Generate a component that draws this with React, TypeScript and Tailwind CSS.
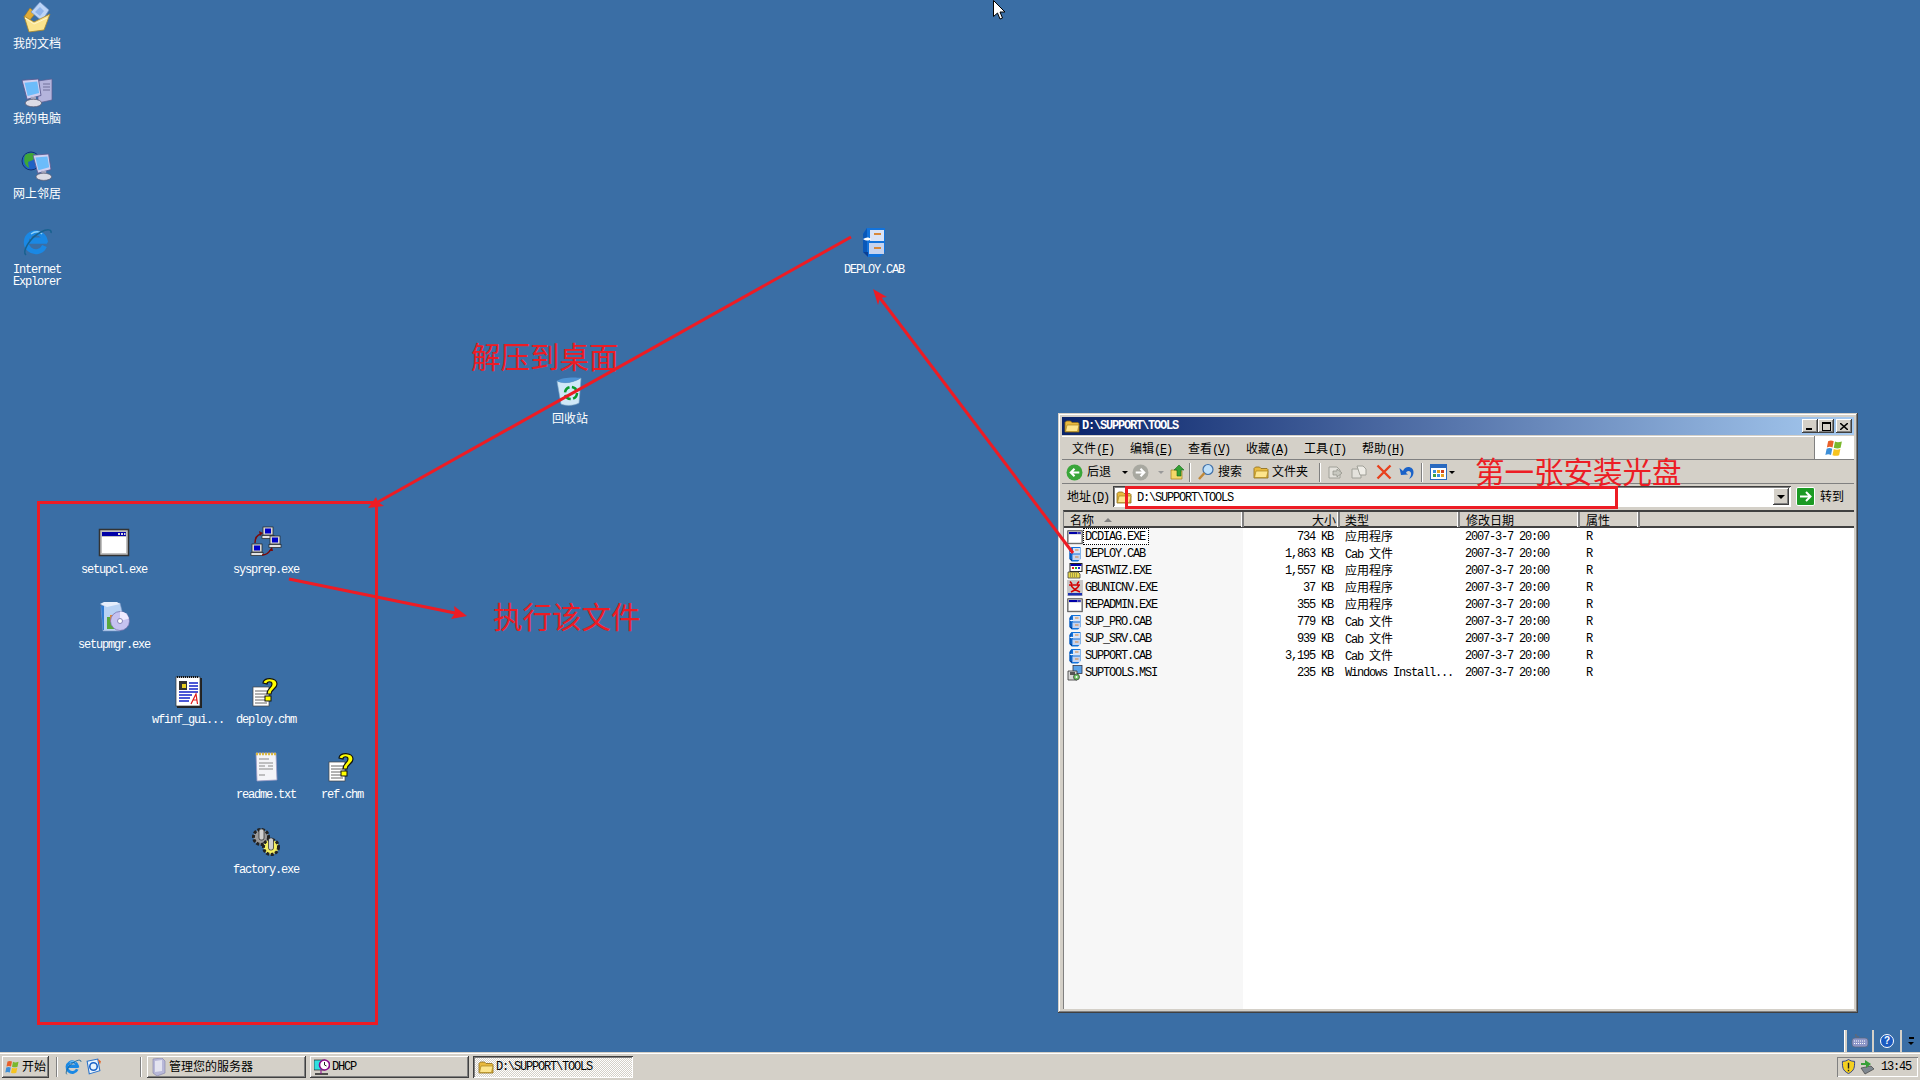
const RED = "#ed1c24";

// SimSun isn't available: CJK and Latin runs get their own fonts so Latin keeps a 6px advance
function Txt({ children }: { children: string }) {
  const parts = children.split(/([\u4e00-\u9fff]+)/).filter(Boolean);
  return (
    <>
      {parts.map((p, i) =>
        /[\u4e00-\u9fff]/.test(p) ? (
          <span key={i} className="font-['Noto_Sans_CJK_SC',sans-serif] text-[12px]">{p}</span>
        ) : (
          <span key={i} className="font-['Liberation_Mono',monospace] text-[12px] tracking-[-1.2px]">{p}</span>
        ),
      )}
    </>
  );
}

const Folder = ({ s = 16 }: { s?: number }) => (
  <svg width={s} height={s} viewBox="0 0 16 16" className="shrink-0">
    <path d="M1 4.500 2.500 3h4L8 4.500h6l1 1V14H1z" fill="#e8b93e" stroke="#8a6a18" strokeWidth=".8" />
    <path d="M1.500 13.500 3 7h12l-1.500 6.500z" fill="#fde58c" stroke="#a88420" strokeWidth=".7" />
  </svg>
);

const WinApp = ({ s = 16 }: { s?: number }) => (
  <svg width={s} height={s} viewBox="0 0 32 32">
    <rect x="1.500" y="3.500" width="29" height="26" fill="#c0c0c0" stroke="#333" strokeWidth="1.500" />
    <rect x="4" y="6" width="24" height="4" fill="#0000a8" />
    <rect x="20" y="7" width="2" height="2" fill="#ddd" /><rect x="23" y="7" width="2" height="2" fill="#ddd" /><rect x="26" y="7" width="1.500" height="2" fill="#ddd" />
    <rect x="4" y="11" width="24" height="16" fill="#fff" />
  </svg>
);

const Cab = ({ s = 16 }: { s?: number }) => (
  <svg width={s} height={s} viewBox="0 0 32 32">
    <path d="M5 8 9 2h18v24l-5 5H10L5 26z" fill="#1273dc" />
    <path d="M5 8 9 2v24l-4 0z" fill="#0a58b8" />
    <path d="M5 26h5v5z" fill="#0c3f92" />
    <path d="M12 4h14v11H12z" fill="#d9e3f7" />
    <path d="M11 17h15v11H11z" fill="#c6d3ef" />
    <rect x="16" y="7" width="7" height="2" fill="#d8883a" />
    <rect x="16" y="21" width="7" height="2" fill="#d8883a" />
    <path d="M5 13c3-2 6-2 8 0-2 2-5 2-8 0z" fill="#fff" />
  </svg>
);

const FastWiz = () => (
  <svg width="16" height="16" viewBox="0 0 16 16">
    <rect x="3" y="0.500" width="12" height="8" fill="#fff" stroke="#222" />
    <rect x="3.500" y="1" width="11" height="2" fill="#0000a8" />
    <rect x="5" y="4" width="2" height="2" fill="#d22" /><rect x="8" y="4" width="2" height="2" fill="#2a2" /><rect x="11" y="4" width="2" height="2" fill="#22c" />
    <path d="M1 9h10l2 2v4H1z" fill="#e8d84a" stroke="#444" strokeWidth=".8" />
    <path d="M3 11h7M3 13h7" stroke="#444" strokeWidth=".8" strokeDasharray="1 1" />
  </svg>
);

const Gb2u = () => (
  <svg width="16" height="16" viewBox="0 0 16 16">
    <rect width="16" height="16" fill="#c8c8c8" />
    <path d="M3 1.500 5 4M12 1.500 10 4M2 5h11M12 5c-1 3-4 5-8 7M4 5c1 3 4 5 9 7" fill="none" stroke="#d40000" strokeWidth="1.600" />
    <path d="M1 13h14v2.500H1z" fill="#1a2fb0" />
  </svg>
);

const Msi = () => (
  <svg width="16" height="16" viewBox="0 0 16 16">
    <rect x="6" y="0.500" width="9" height="8" fill="#5aa2e8" stroke="#334" strokeWidth=".8" />
    <path d="M1 6h9v9H1z" fill="#d8d8d8" stroke="#333" strokeWidth=".8" />
    <rect x="3" y="7" width="5" height="3" fill="#555" />
    <circle cx="9.500" cy="12" r="3" fill="#68c060" stroke="#333" strokeWidth=".7" />
    <circle cx="9.500" cy="12" r="1" fill="#fff" />
  </svg>
);

const WinFlag = ({ s = 16 }: { s?: number }) => (
  <svg width={s} height={s} viewBox="0 0 16 16">
    <path d="M2.500 2.500c1.500-.8 3-.8 4.500 0L6 7.500C4.500 6.800 3 6.800 1.500 7.500z" fill="#e8602a" />
    <path d="M8 2.800c1.500.8 3 .8 5.500 0l-1 5c-2 .8-3.500.6-5.500-.1z" fill="#7ab82e" />
    <path d="M1.300 8.500c1.500-.8 3-.8 4.500 0l-1 5c-1.500-.7-3-.7-4.500 0z" fill="#3d8fd8" />
    <path d="M7 8.700c1.500.8 3.500.9 5.300 0l-1 5c-2 .8-3.500.7-5.300 0z" fill="#f6c420" />
  </svg>
);

const Monitor = ({ x, y, w = 15 }: { x: number; y: number; w?: number }) => (
  <g transform={`translate(${x} ${y}) scale(${w / 15})`}>
    <path d="M0 1 13 0l2 13-11 3z" fill="#d0d0f0" stroke="#5a5a90" strokeWidth=".7" />
    <path d="M2 3 12 2l1.500 9-9 2.500z" fill="#6cbcfa" />
    <rect x="7" y="14" width="4" height="4" fill="#a8a8c0" />
    <ellipse cx="9" cy="19" rx="6.500" ry="3" fill="#dcdce6" stroke="#5a5a70" strokeWidth=".6" />
  </g>
);

const MyDocs = () => (
  <svg width="32" height="32" viewBox="0 0 32 32">
    <path d="M3 16 9 7l6 5-8 9z" fill="#e0ac38" stroke="#9a7420" strokeWidth=".6" />
    <path d="M10 11 19 1l9 8-7 11z" fill="#bcd4f6" stroke="#6f8fc4" strokeWidth=".7" />
    <path d="M14 11 19 6l4 4-4 5z" fill="#8fb4ea" />
    <path d="M3 15 13 21l16-8-6 16-15 2z" fill="#fbe48e" stroke="#a88428" strokeWidth=".8" />
    <path d="M4 17 13 23l13-6" fill="none" stroke="#fff6cc" />
  </svg>
);

const MyPc = () => (
  <svg width="32" height="32" viewBox="0 0 32 32">
    <path d="M17 5 31 3v21l-14 3z" fill="#b4b4dc" stroke="#5c5c90" strokeWidth=".7" />
    <path d="M22 8h7M22 11h7M22 14h7" stroke="#70709a" />
    <Monitor x={1} y={3} w={19} />
  </svg>
);

const Network = () => (
  <svg width="32" height="32" viewBox="0 0 32 32">
    <circle cx="10" cy="10" r="9" fill="#1f62c4" stroke="#123072" />
    <path d="M4 4c3-2 8-3 11 0l-3 5-5 2 1 6c-4-2-6-7-4-13z" fill="#3fa636" />
    <Monitor x={12} y={3} w={18} />
  </svg>
);

const IeLogo = ({ s = 32 }: { s?: number }) => (
  <svg width={s} height={s} viewBox="0 0 32 32">
    <path d="M23.500 20a9.500 9.500 0 1 1 .5-6H9" fill="none" stroke="#1a88e4" strokeWidth="5" />
    <path d="M6 16h20" stroke="#1a88e4" strokeWidth="3.500" />
    <path d="M10 8c4-3 9-3 11 0" fill="none" stroke="#8ed2fa" strokeWidth="1.500" />
    <path d="M5 29C1 26 8 12 20 6c6-3 11-3 10 1" fill="none" stroke="#17618f" strokeWidth="1.500" />
  </svg>
);

const Recycle = () => (
  <svg width="32" height="32" viewBox="0 0 32 32">
    <path d="M3 5c6 3 16 2 24-3l-2 25c-5 3-14 3-18 1z" fill="#d0e8f8" stroke="#7fa8c8" strokeWidth=".6" />
    <path d="M3 5c6 3 16 2 24-3-5-1-20-1-24 3z" fill="#4f94d4" />
    <circle cx="17" cy="17" r="6" fill="none" stroke="#0b9a2c" strokeWidth="2.500" strokeDasharray="7 2.500" />
  </svg>
);

const SetupMgr = () => (
  <svg width="32" height="32" viewBox="0 0 32 32">
    <path d="M3 5 22 2l2 8-2 20H5z" fill="#b8d2f4" stroke="#8098c4" strokeWidth=".6" />
    <path d="M2 3 9 6l13-3-3-2H6z" fill="#e6eefc" />
    <path d="M3 5h3v24H5z" fill="#2f7ad0" />
    <rect x="9" y="16" width="7" height="12" fill="#58a83c" /><rect x="12" y="14" width="5" height="7" fill="#e08a38" />
    <circle cx="22" cy="20" r="9.500" fill="#c6c2f0" stroke="#6e6ca8" strokeWidth=".7" />
    <path d="M22 10.500a9.500 9.500 0 0 1 9 7l-9 2.500z" fill="#eeeaff" />
    <circle cx="22" cy="20" r="2.500" fill="#fff" stroke="#8784b8" />
  </svg>
);

const Pc = ({ x, y }: { x: number; y: number }) => (
  <g transform={`translate(${x} ${y})`}>
    <rect x="1" y="0" width="10" height="8" fill="#d8d8d8" stroke="#222" strokeWidth=".7" />
    <rect x="3" y="1.500" width="6" height="5" fill="#0000c8" />
    <rect x="0" y="8.500" width="12" height="3" fill="#e4e4e4" stroke="#222" strokeWidth=".7" />
  </g>
);

const Sysprep = () => (
  <svg width="32" height="32" viewBox="0 0 32 32">
    <Pc x={12} y={1} /><Pc x={19} y={10} /><Pc x={1} y={18} />
    <path d="M5 17c0-5 2-8 6-9M12 29c4 0 7-2 9-6" fill="none" stroke="#7a0a0a" strokeWidth="1.500" />
    <path d="M9 5l4 2-3 3zM19 25l3-4 1 4z" fill="#7a0a0a" />
  </svg>
);

const WfDoc = () => (
  <svg width="32" height="32" viewBox="0 0 32 32">
    <rect x="5" y="2" width="25" height="30" fill="#222" />
    <rect x="4" y="1" width="24" height="29" fill="#fff" stroke="#333" strokeWidth=".7" />
    <path d="M5 1h22" stroke="#111" strokeWidth="2" strokeDasharray="1 1" />
    <rect x="7" y="5" width="8" height="9" fill="#333" /><rect x="10" y="8" width="4" height="4" fill="#e8d020" />
    <path d="M17 7h9M17 10h9M17 13h9M7 16h19M7 19h13M7 22h11M7 25h10" stroke="#1020c8" strokeWidth="1.300" />
    <path d="M19 28 24 18l1.500 10M21 24h4" fill="none" stroke="#e01818" strokeWidth="1.200" />
  </svg>
);

const Chm = () => (
  <svg width="32" height="32" viewBox="0 0 32 32">
    <rect x="3" y="11" width="16" height="19" fill="#fff" stroke="#444" strokeWidth=".7" />
    <path d="M5 15h12M5 18h12M5 21h12M5 24h12M5 27h12" stroke="#666" />
    <path d="M13 7c0-6 14-6 14 1 0 5-6 5-6 10h-4c0-6 5-6 5-10 0-3-5-3-5 0z" fill="#ffff00" stroke="#111" strokeWidth="1.200" />
    <rect x="15" y="20" width="6" height="5" fill="#ffff00" stroke="#111" />
  </svg>
);

const TxtDoc = () => (
  <svg width="32" height="32" viewBox="0 0 32 32">
    <path d="M6 2h20l1 27-20 1z" fill="#f4f4f8" stroke="#9a9ac4" strokeWidth=".8" />
    <path d="M6 3h20" stroke="#d8b840" strokeWidth="2.500" strokeDasharray="2 1" />
    <path d="M9 8h10M9 12h14M9 15h6M18 15h5M9 18h14M9 24h6" stroke="#888" />
  </svg>
);

const Factory = () => (
  <svg width="32" height="32" viewBox="0 0 32 32">
    <circle cx="11" cy="11" r="7.500" fill="#9a9a9a" stroke="#222" strokeWidth="3" strokeDasharray="3 1.500" />
    <rect x="9" y="3" width="5" height="11" rx="2" fill="#d0d0d0" stroke="#222" strokeWidth=".7" />
    <circle cx="21" cy="21" r="7.500" fill="#f4f060" stroke="#222" strokeWidth="3" strokeDasharray="3 1.500" />
    <rect x="18.500" y="12" width="5" height="12" rx="2" fill="#d0d0d0" stroke="#222" strokeWidth=".7" />
  </svg>
);

const desktopIcons = [
  { pos: "left-[0px] top-[0px]", icon: <MyDocs />, label: "我的文档" },
  { pos: "left-[0px] top-[75px]", icon: <MyPc />, label: "我的电脑" },
  { pos: "left-[0px] top-[150px]", icon: <Network />, label: "网上邻居" },
  { pos: "left-[0px] top-[225px]", icon: <IeLogo />, label: "Internet\nExplorer" },
  { pos: "left-[837px] top-[225px]", icon: <Cab s={32} />, label: "DEPLOY.CAB" },
  { pos: "left-[533px] top-[375px]", icon: <Recycle />, label: "回收站" },
  { pos: "left-[77px] top-[525px]", icon: <WinApp s={32} />, label: "setupcl.exe" },
  { pos: "left-[229px] top-[525px]", icon: <Sysprep />, label: "sysprep.exe" },
  { pos: "left-[77px] top-[600px]", icon: <SetupMgr />, label: "setupmgr.exe" },
  { pos: "left-[151px] top-[675px]", icon: <WfDoc />, label: "wfinf_gui..." },
  { pos: "left-[229px] top-[675px]", icon: <Chm />, label: "deploy.chm" },
  { pos: "left-[229px] top-[750px]", icon: <TxtDoc />, label: "readme.txt" },
  { pos: "left-[305px] top-[750px]", icon: <Chm />, label: "ref.chm" },
  { pos: "left-[229px] top-[825px]", icon: <Factory />, label: "factory.exe" },
];

const files = [
  { name: "DCDIAG.EXE", size: "734 KB", type: "应用程序", icon: <WinApp /> },
  { name: "DEPLOY.CAB", size: "1,863 KB", type: "Cab 文件", icon: <Cab /> },
  { name: "FASTWIZ.EXE", size: "1,557 KB", type: "应用程序", icon: <FastWiz /> },
  { name: "GBUNICNV.EXE", size: "37 KB", type: "应用程序", icon: <Gb2u /> },
  { name: "REPADMIN.EXE", size: "355 KB", type: "应用程序", icon: <WinApp /> },
  { name: "SUP_PRO.CAB", size: "779 KB", type: "Cab 文件", icon: <Cab /> },
  { name: "SUP_SRV.CAB", size: "939 KB", type: "Cab 文件", icon: <Cab /> },
  { name: "SUPPORT.CAB", size: "3,195 KB", type: "Cab 文件", icon: <Cab /> },
  { name: "SUPTOOLS.MSI", size: "235 KB", type: "Windows Install...", icon: <Msi /> },
];

const menus = [
  ["文件", "F"], ["编辑", "E"], ["查看", "V"], ["收藏", "A"], ["工具", "T"], ["帮助", "H"],
];

const RAISED = "shadow-[inset_-1px_-1px_#404040,inset_1px_1px_#fff,inset_-2px_-2px_#808080]";
const SUNKEN = "shadow-[inset_1px_1px_#404040,inset_-1px_-1px_#fff,inset_2px_2px_#808080]";
const HEAD = "flex h-[15px] items-center border-r-2 border-r-[#808080] shadow-[inset_-1px_0_#fff]";

const Sep = () => <div className="mx-[3px] h-[19px] w-[2px] border-l border-r border-l-[#808080] border-r-white" />;

function NavCircle({ color }: { color: string }) {
  return (
    <svg width="17" height="17" viewBox="0 0 16 16">
      <circle cx="8" cy="8" r="7.500" fill={color} />
      <path d="M12.500 8H5M8 4.500 4.500 8 8 11.500" fill="none" stroke="#fff" strokeWidth="2" />
    </svg>
  );
}

function Toolbar() {
  return (
    <div className="flex h-[24px] items-center border-b border-b-[#808080] pl-[4px] pt-[1px] whitespace-pre">
      <NavCircle color="#3aa63a" />
      <span className="ml-[4px]"><Txt>后退</Txt></span>
      <span className="ml-[11px] h-0 w-0 border-x-[3px] border-t-[3px] border-x-transparent border-t-black" />
      <span className="ml-[4px] rotate-180"><NavCircle color="#a8a8a0" /></span>
      <span className="ml-[9px] h-0 w-0 border-x-[3px] border-t-[3px] border-x-transparent border-t-[#999]" />
      <svg className="ml-[6px]" width="16" height="16" viewBox="0 0 16 16">
        <path d="M1 6h5l1 1h5v8H1z" fill="#f4d868" stroke="#a08020" strokeWidth=".7" />
        <path d="M9 1 14 6h-3v6H7V6H4z" fill="#34a034" stroke="#1a6a1a" strokeWidth=".6" />
      </svg>
      <Sep />
      <svg className="ml-[3px]" width="18" height="18" viewBox="0 0 18 18">
        <circle cx="11" cy="6.500" r="5" fill="#bfe0fa" stroke="#4070a8" strokeWidth="1.200" />
        <path d="M7.500 10 2 16" stroke="#c08838" strokeWidth="2.500" />
      </svg>
      <span className="ml-[3px]"><Txt>搜索</Txt></span>
      <span className="ml-[11px]"><Folder /></span>
      <span className="ml-[3px]"><Txt>文件夹</Txt></span>
      <div className="ml-[8px]"><Sep /></div>
      <svg className="ml-[3px]" width="16" height="16" viewBox="0 0 16 16">
        <path d="M2 3h8l3 3v8H2z" fill="#e4e2dc" stroke="#a0a098" />
        <path d="M6 7h4V5l5 4-5 4v-2H6z" fill="#c8c8c0" stroke="#8c8c84" strokeWidth=".7" />
      </svg>
      <svg className="ml-[8px]" width="16" height="16" viewBox="0 0 16 16">
        <path d="M1 5h7l2 2v7H1z" fill="#e4e2dc" stroke="#a0a098" />
        <path d="M6 2h6l3 3v6H9z" fill="#eeece6" stroke="#a0a098" />
      </svg>
      <svg className="ml-[9px]" width="16" height="16" viewBox="0 0 16 16">
        <path d="M1.500 1.500 14.500 14.500M14.500 1.500 1.500 14.500" stroke="#e8401c" strokeWidth="2.400" />
      </svg>
      <svg className="ml-[7px]" width="16" height="16" viewBox="0 0 16 16">
        <path d="M4 7C6 1 15 2 14.500 9c-.3 3-2 5-4.500 6 1.500-2 3-5 1.500-7C10 6 7.500 7 7 9l2 1.500-7 .5L.5 4z" fill="#1a62c8" />
      </svg>
      <div className="ml-[3px]"><Sep /></div>
      <svg className="ml-[4px]" width="18" height="16" viewBox="0 0 18 16">
        <rect x=".5" y=".5" width="16" height="15" fill="#fff" stroke="#2a6ac0" />
        <rect x="1" y="1" width="15" height="3" fill="#2a6ac0" />
        <rect x="3" y="6" width="3" height="3" fill="#3a8fe0" /><rect x="7" y="6" width="3" height="3" fill="#e8a020" /><rect x="11" y="6" width="3" height="3" fill="#d04020" />
        <rect x="3" y="10" width="3" height="3" fill="#40a040" /><rect x="7" y="10" width="3" height="3" fill="#3a8fe0" /><rect x="11" y="10" width="3" height="3" fill="#e8a020" />
      </svg>
      <span className="ml-[1px] h-0 w-0 border-x-[3px] border-t-[3px] border-x-transparent border-t-black" />
    </div>
  );
}

function AddressBar() {
  return (
    <div className="flex h-[25px] items-center whitespace-pre">
      <span className="ml-[5px] w-[46px]"><Txt>地址(</Txt><u><Txt>D</Txt></u><Txt>)</Txt></span>
      <div className={`flex h-[21px] w-[678px] items-center pl-[3px] pr-[2px] bg-white ${SUNKEN}`}>
        <Folder />
        <span className="ml-[5px] mt-[2px]"><Txt>{"D:\\SUPPORT\\TOOLS"}</Txt></span>
        <div className={`ml-auto flex h-[17px] w-[16px] items-center justify-center bg-[#d4d0c8] ${RAISED}`}>
          <span className="h-0 w-0 border-x-[4px] border-t-[4px] border-x-transparent border-t-black" />
        </div>
      </div>
      <div className="ml-[5px] flex h-[19px] w-[19px] items-center justify-center rounded-[2px] border border-white bg-[#1c9a24] text-white">
        <svg width="13" height="13" viewBox="0 0 13 13"><path d="M1 6.500h10M7 2l4.500 4.500L7 11" fill="none" stroke="#fff" strokeWidth="2" /></svg>
      </div>
      <span className="ml-[5px]"><Txt>转到</Txt></span>
    </div>
  );
}

function Explorer() {
  return (
    <div className="absolute left-[1058px] top-[413px] flex h-[600px] w-[800px] flex-col bg-[#d4d0c8] p-[4px] shadow-[inset_-1px_-1px_#404040,inset_1px_1px_#d4d0c8,inset_-2px_-2px_#808080,inset_2px_2px_#fff]">
      <div className="flex h-[18px] items-center bg-[linear-gradient(90deg,#0a246a,#a6caf0)] pl-[2px] pr-[2px] whitespace-pre">
        <Folder />
        <span className="ml-[2px] font-bold text-white"><Txt>{"D:\\SUPPORT\\TOOLS"}</Txt></span>
        <div className="ml-auto flex items-center">
          {["min", "max"].map((b) => (
            <div key={b} className={`flex h-[14px] w-[16px] items-center justify-center bg-[#d4d0c8] ${RAISED}`}>
              {b === "min" ? <span className="mt-[6px] mr-[2px] h-[2px] w-[6px] bg-black" /> : <span className="h-[9px] w-[9px] border border-t-2 border-black" />}
            </div>
          ))}
          <div className={`ml-[2px] flex h-[14px] w-[16px] items-center justify-center bg-[#d4d0c8] ${RAISED}`}>
            <svg width="8" height="7" viewBox="0 0 8 7"><path d="M0 0 8 7M8 0 0 7" stroke="#000" strokeWidth="1.500" /></svg>
          </div>
        </div>
      </div>

      <div className="mt-[1px] flex h-[24px] items-stretch border-b border-b-[#808080] shadow-[inset_0_1px_#fff] whitespace-pre">
        <div className="flex items-center pl-[10px] pt-[3px]">
          {menus.map(([zh, key]) => (
            <span key={key} className="w-[58px]"><Txt>{zh + "("}</Txt><u><Txt>{key}</Txt></u><Txt>)</Txt></span>
          ))}
        </div>
        <div className="ml-auto flex w-[40px] items-center justify-center border-l border-l-[#808080] bg-white"><WinFlag s={20} /></div>
      </div>
      <Toolbar />
      <AddressBar />

      <div className="mt-[1px] ml-[1px] flex min-h-0 flex-1 flex-col border-t-2 border-l border-t-[#404040] border-l-[#808080] bg-white">
        <div className="flex h-[16px] shrink-0 border-b-2 border-b-[#404040] bg-[#d4d0c8] whitespace-pre">
          <div className={`${HEAD} w-[180px] pl-[6px]`}>
            <Txt>名称</Txt>
            <span className="ml-[10px] h-0 w-0 border-x-[4px] border-b-[4px] border-x-transparent border-b-[#808080]" />
          </div>
          <div className={`${HEAD} w-[96px] justify-end pr-[2px]`}><Txt>大小</Txt></div>
          <div className={`${HEAD} w-[120px] pl-[5px]`}><Txt>类型</Txt></div>
          <div className={`${HEAD} w-[120px] pl-[6px]`}><Txt>修改日期</Txt></div>
          <div className={`${HEAD} w-[60px] pl-[6px]`}><Txt>属性</Txt></div>
        </div>
        <div className="flex-1 bg-[linear-gradient(90deg,#f7f7f7_179px,#fff_179px)] whitespace-pre">
          {files.map((f, i) => (
            <div key={f.name} className="grid h-[17px] grid-cols-[180px_96px_120px_120px_60px] items-center">
              <div className="flex h-[17px] items-center pl-[3px]">
                {f.icon}
                {i === 0 ? (
                  <span className="flex h-[17px] items-center bg-white pl-[2px] pr-[4px] outline-1 outline-dotted outline-offset-[-1px] outline-black"><Txt>{f.name}</Txt></span>
                ) : (
                  <span className="ml-[2px]"><Txt>{f.name}</Txt></span>
                )}
              </div>
              <div className="pr-[7px] text-right"><Txt>{f.size}</Txt></div>
              <div className="pl-[5px]"><Txt>{f.type}</Txt></div>
              <div className="pl-[5px]"><Txt>2007-3-7 20:00</Txt></div>
              <div className="pl-[6px]"><Txt>R</Txt></div>
            </div>
          ))}
        </div>
      </div>
    </div>
  );
}

function Annotations() {
  return (
    <svg className="pointer-events-none absolute left-0 top-0" width="1920" height="1080" fill="none" stroke={RED} strokeWidth="3">
      <rect x="38.500" y="502.500" width="338" height="521" />
      <rect x="1126.500" y="487.500" width="490" height="20" />
      <path d="M851 237 378 502" />
      <path d="M368 508 376 497 378 502 384 506z" fill={RED} stroke="none" />
      <path d="M1073 553 880 298" />
      <path d="M873 289 887 297 880 298 878 305z" fill={RED} stroke="none" />
      <path d="M289 579 455 613" />
      <path d="M467 616 454 606 455 613 451 619z" fill={RED} stroke="none" />
    </svg>
  );
}

function Note({ pos, children }: { pos: string; children: string }) {
  return (
    <span className={`absolute ${pos} font-['Noto_Sans_CJK_SC',sans-serif] text-[29.5px] font-normal leading-[34px] whitespace-nowrap text-[#ed1c24]`}>
      {children}
    </span>
  );
}

function Taskbar() {
  return (
    <div className="flex h-[28px] shrink-0 items-center border-t border-t-[#d4d0c8] bg-[#d4d0c8] pl-[2px] shadow-[inset_0_1px_#fff] whitespace-pre">
      <div className={`flex h-[22px] w-[47px] items-center pl-[3px] pt-[1px] ${RAISED}`}>
        <WinFlag />
        <span className="ml-[1px]"><Txt>开始</Txt></span>
      </div>
      <div className="ml-[7px] h-[20px] w-[2px] border-x border-l-[#808080] border-r-white" />
      <span className="ml-[6px]"><IeLogo s={18} /></span>
      <svg className="ml-[3px]" width="17" height="17" viewBox="0 0 16 16">
        <path d="M2 3 12 1l2 11-10 3z" fill="#e8f2fc" stroke="#2a72c8" />
        <circle cx="8" cy="8" r="3.500" fill="none" stroke="#1a62c8" strokeWidth="1.500" />
        <path d="M12 1l3 2-1 3z" fill="#e86020" />
      </svg>
      <div className="ml-[38px] h-[20px] w-[2px] border-x border-l-[#808080] border-r-white" />
      <div className={`ml-[5px] flex h-[22px] w-[159px] items-center pl-[4px] pt-[1px] ${RAISED}`}>
        <svg width="16" height="18" viewBox="0 0 16 18"><path d="M2 1 11 0l3 3v12l-8 3-4-3z" fill="#b8b8d8" stroke="#8080a8" strokeWidth=".6" /><path d="M4 3 11 2v11l-7 1z" fill="#e4e4f0" /></svg>
        <span className="ml-[2px]"><Txt>管理您的服务器</Txt></span>
      </div>
      <div className={`ml-[4px] flex h-[22px] w-[159px] items-center pl-[4px] pt-[1px] ${RAISED}`}>
        <svg width="16" height="18" viewBox="0 0 16 18">
          <rect x="0" y="2" width="11" height="10" fill="#30e0e0" stroke="#222" strokeWidth=".7" />
          <circle cx="10.500" cy="7" r="5" fill="#fff" stroke="#8a0a8a" strokeWidth="1.600" />
          <path d="M10.500 4v3l2 1" stroke="#222" fill="none" />
          <path d="M1 16h13" stroke="#222" strokeWidth="1.500" /><path d="M7 12v4" stroke="#8a0a8a" />
        </svg>
        <span className="ml-[2px]"><Txt>DHCP</Txt></span>
      </div>
      <div className={`ml-[4px] flex h-[22px] w-[160px] items-center bg-[repeating-conic-gradient(#fff_0%_25%,#d4d0c8_0%_50%)] bg-[length:2px_2px] pl-[5px] pt-[1px] ${SUNKEN}`}>
        <Folder />
        <span className="ml-[2px]"><Txt>{"D:\\SUPPORT\\TOOLS"}</Txt></span>
      </div>
      <div className="ml-auto mr-[2px] flex h-[20px] w-[81px] items-center pl-[4px] shadow-[inset_1px_1px_#808080,inset_-1px_-1px_#fff]">
        <svg width="15" height="15" viewBox="0 0 16 16">
          <path d="M8 .5c2 1.500 4 2 6.500 2 0 6 0 10-6.500 13-6.500-3-6.500-7-6.500-13C4 2.500 6 2 8 .5z" fill="#f4d020" stroke="#2a3a88" />
          <path d="M8 4v6M8 11.500v1.500" stroke="#222" strokeWidth="1.500" />
        </svg>
        <svg className="ml-[3px]" width="16" height="16" viewBox="0 0 16 16">
          <path d="M2 9 12 7l3 3-9 5z" fill="#808890" stroke="#333" strokeWidth=".6" />
          <path d="M2 4h4V1l6 4-5 4V6H2z" fill="#38a038" />
        </svg>
        <span className="ml-[6px]"><Txt>13:45</Txt></span>
      </div>
    </div>
  );
}

function LangBar() {
  return (
    <div className="absolute bottom-0 right-0 flex h-[22px] w-[76px] items-center bg-[#3a6ea5]">
      <div className="h-[22px] w-[3px] border-l border-l-white bg-[#d4d0c8]" />
      <div className="flex h-[22px] w-[27px] items-center justify-center border-r-2 border-r-[#d4d0c8]">
        <svg width="18" height="14" viewBox="0 0 18 14">
          <path d="M5 0C4 2 6 3 8 3" fill="none" stroke="#606878" strokeWidth="1.500" />
          <rect x="1" y="4" width="16" height="9" rx="3" fill="#8c96c8" stroke="#606878" strokeWidth=".7" />
          <path d="M3 7h12M3 9.500h12" stroke="#fff" strokeDasharray="1 1" />
        </svg>
      </div>
      <div className="flex h-[22px] w-[28px] items-center justify-center border-r-2 border-r-[#d4d0c8]">
        <div className="flex h-[14px] w-[14px] items-center justify-center rounded-full border border-white bg-[#1a5ac0] font-['Liberation_Sans',sans-serif] text-[10px] font-bold leading-none text-white">?</div>
      </div>
      <div className="flex flex-1 flex-col items-center gap-[3px]">
        <span className="h-[2px] w-[5px] bg-black" />
        <span className="h-0 w-0 border-x-[3px] border-t-[3px] border-x-transparent border-t-black" />
      </div>
    </div>
  );
}

export default function App() {
  return (
    <div className="flex h-[1080px] w-[1920px] flex-col overflow-hidden bg-[#3a6ea5] font-['Liberation_Mono',monospace] text-[12px] leading-[14px] text-black">
      <div className="relative flex-1">
        {desktopIcons.map((d) => (
          <div key={d.label} className={`absolute ${d.pos} flex w-[74px] flex-col items-center`}>
            <div className="mt-[1px] h-[32px] w-[32px]">{d.icon}</div>
            <div className={`${/[\u4e00-\u9fff]/.test(d.label) ? "mt-[4px]" : "mt-[6px]"} text-center leading-[12px] text-white whitespace-pre`}><Txt>{d.label}</Txt></div>
          </div>
        ))}
        <Explorer />
        <LangBar />
      </div>
      <Taskbar />
      <Annotations />
      <Note pos="left-[471px] top-[338px]">解压到桌面</Note>
      <Note pos="left-[493px] top-[598px]">执行该文件</Note>
      <Note pos="left-[1475px] top-[453px]">第一张安装光盘</Note>
      <svg className="absolute left-[993px] top-0" width="13" height="21" viewBox="0 0 13 21">
        <path d="M.5.5v16l4-3.500 2.500 6 2.500-1-2.500-6H12z" fill="#fff" stroke="#000" />
      </svg>
    </div>
  );
}
